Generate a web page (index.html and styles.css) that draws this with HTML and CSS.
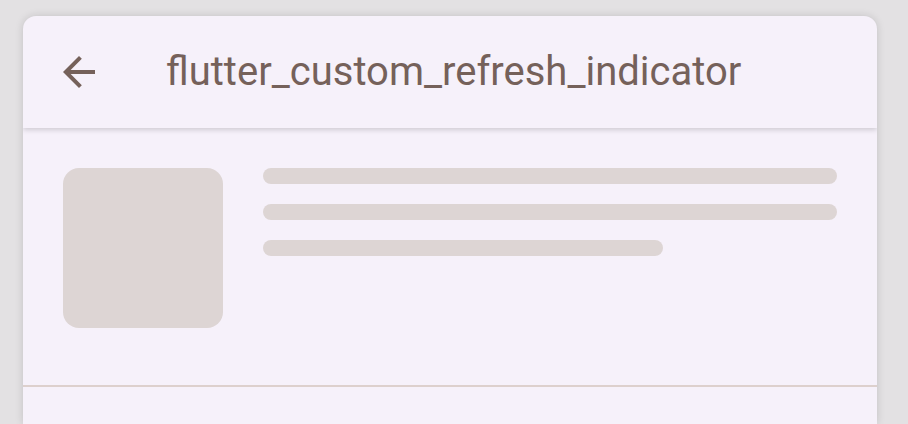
FILE: index.html
```html
<!DOCTYPE html>
<html>
<head>
<meta charset="utf-8">
<link rel="stylesheet" href="styles.css">
</head>
<body>
<div class="frame">
  <div class="card">
    <header class="appbar">
      <button class="back" aria-label="Back">
        <svg viewBox="0 0 24 24" width="48" height="48"><path d="M20 11H7.83l5.59-5.59L12 4l-8 8 8 8 1.41-1.41L7.83 13H20v-2z" fill="currentColor"/></svg>
      </button>
      <h1 class="title">flutter_custom_refresh_indicator</h1>
    </header>
    <div class="list">
      <div class="item">
        <div class="thumb"></div>
        <div class="lines">
          <div class="bar"></div>
          <div class="bar"></div>
          <div class="bar short"></div>
        </div>
      </div>
      <div class="item"></div>
    </div>
  </div>
</div>
</body>
</html>
```
FILE: styles.css
```css
html, body {
  margin: 0;
  padding: 0;
  height: 424px;
  overflow: hidden;
}
body {
  background: #e3e1e3;
  font-family: Roboto, "Liberation Sans", sans-serif;
}
.frame {
  padding: 16px 31px 0 23px;
  height: 408px;
}
.card {
  background: #f6f1fa;
  border-radius: 13px 13px 0 0;
  height: 100%;
  overflow: hidden;
  box-shadow: 0 0 8px rgba(0, 0, 0, 0.14);
}
.appbar {
  height: 112px;
  display: flex;
  align-items: center;
  box-shadow: 0 2px 5px rgba(0, 0, 0, 0.16);
  position: relative;
  z-index: 1;
}
.back {
  margin-left: 32px;
  width: 48px;
  height: 48px;
  padding: 0;
  border: 0;
  background: none;
  color: #75615a;
  display: flex;
}
.title {
  margin: 0 0 0 63px;
  font-size: 40px;
  line-height: 48px;
  font-weight: 400;
  color: #75615a;
  letter-spacing: 0;
}
.item {
  display: flex;
  gap: 40px;
  padding: 40px 40px 57px;
  border-bottom: 2px solid #ddd0cd;
}
.thumb {
  width: 160px;
  height: 160px;
  border-radius: 16px;
  background: #ddd5d4;
  flex: none;
}
.lines {
  flex: 1;
  display: flex;
  flex-direction: column;
  gap: 20px;
}
.bar {
  height: 16px;
  border-radius: 8px;
  background: #ddd5d4;
}
.bar.short {
  width: 400px;
}
```
